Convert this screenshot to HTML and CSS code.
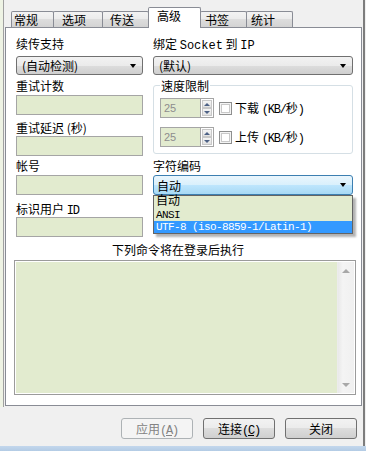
FILE: index.html
```html
<!DOCTYPE html>
<html lang="zh-CN">
<head>
    <meta charset="UTF-8">
    <meta name="viewport" content="width=device-width, initial-scale=1.0">
    <title>高级</title>
    <link rel="stylesheet" href="styles.css">
</head>
<body>
    <div class="window">
        <div class="edge"></div>
        <div class="dialog">
            <div class="tabs">
                <div class="tab t1">常规</div>
                <div class="tab t2">选项</div>
                <div class="tab t3">传送</div>
                <div class="tab active">高级</div>
                <div class="tab t5">书签</div>
                <div class="tab t6">统计</div>
            </div>
            <div class="panel">
                <div class="form">
                    <div class="col">
                        <div class="lbl">续传支持</div>
                        <div class="select mt5">(自动检测)<span class="arrow"></span></div>
                        <div class="lbl mt4">重试计数</div>
                        <div class="field mt2"></div>
                        <div class="lbl mt6">重试延迟 (秒)</div>
                        <div class="field mt1"></div>
                        <div class="lbl mt3">帐号</div>
                        <div class="field mt2"></div>
                        <div class="lbl mt7">标识用户 <span class="en">ID</span></div>
                        <div class="field mt1"></div>
                    </div>
                    <div class="col">
                        <div class="lbl">绑定 <span class="en wide">Socket</span> 到 <span class="en wide">IP</span></div>
                        <div class="select mt5">(默认)<span class="arrow"></span></div>
                        <fieldset class="speed">
                            <legend>速度限制</legend>
                            <div class="srow first">
                                <div class="spin-val">25</div>
                                <div class="spin-btns">
                                    <div class="sb"><span class="up"></span></div>
                                    <div class="sb"><span class="down"></span></div>
                                </div>
                                <div class="check"></div>
                                <div class="clabel">下载 <span class="en">(KB/</span>秒<span class="en">)</span></div>
                            </div>
                            <div class="srow second">
                                <div class="spin-val">25</div>
                                <div class="spin-btns">
                                    <div class="sb"><span class="up"></span></div>
                                    <div class="sb"><span class="down"></span></div>
                                </div>
                                <div class="check"></div>
                                <div class="clabel">上传 <span class="en">(KB/</span>秒<span class="en">)</span></div>
                            </div>
                        </fieldset>
                        <div class="lbl mt5">字符编码</div>
                        <div class="combo mt2">
                            <div class="select open">自动<span class="arrow"></span></div>
                            <div class="dropdown">
                                <div class="item first">自动</div>
                                <div class="item latin">ANSI</div>
                                <div class="item latin selected">UTF-8 (iso-8859-1/Latin-1)</div>
                            </div>
                        </div>
                    </div>
                </div>
                <div class="cmd-label">下列命令将在登录后执行</div>
                <div class="cmd">
                    <div class="cmd-area"></div>
                    <div class="scroll">
                        <div class="sarrow"><span class="up gray"></span></div>
                        <div class="sarrow"><span class="down gray"></span></div>
                    </div>
                </div>
            </div>
            <div class="buttons">
                <div class="btn disabled">应用<span class="en">(<u>A</u>)</span></div>
                <div class="btn">连接<span class="en">(<u>C</u>)</span></div>
                <div class="btn">关闭</div>
            </div>
        </div>
        <div class="frame"></div>
    </div>
    <div class="footer"></div>
</body>
</html>
```

FILE: styles.css
```css
* {
    box-sizing: border-box;
    margin: 0;
    padding: 0;
}
body {
    width: 366px;
    height: 451px;
    overflow: hidden;
    background: #f0f0f0;
    font-family: "Noto Sans CJK SC", sans-serif;
    font-size: 12px;
    color: #000;
}
.en {
    font-family: "Liberation Mono", monospace;
    font-size: 12px;
    letter-spacing: -1.2px;
}
.en.wide {
    letter-spacing: 0;
}
.window {
    display: flex;
    height: 446px;
}
.edge {
    width: 4px;
    height: 407px;
    background: #eef3e4;
    border-right: 1px solid #a0a0a0;
}
.dialog {
    width: 359px;
    padding-top: 7px;
}
.frame {
    width: 2px;
    background: #7d7d7d;
}
.footer {
    height: 5px;
    background: linear-gradient(#c3d7ec, #b3cbe5);
}

/* tabs */
.tabs {
    display: flex;
    align-items: flex-end;
    height: 20px;
    padding-left: 7px;
}
.tab {
    height: 16px;
    line-height: 16px;
    border: 1px solid #898c95;
    border-bottom: none;
    border-radius: 2px 2px 0 0;
    margin-right: -1px;
    background: linear-gradient(#f3f3f3, #ebebeb 50%, #dddddd 50%, #d3d3d3);
    white-space: nowrap;
}
.t1 { width: 43px; padding-left: 2px; }
.t2 { width: 50px; padding-left: 8px; }
.t3 { width: 47px; padding-left: 7px; }
.t5 { width: 47px; padding-left: 4px; }
.t6 { width: 47px; padding-left: 4px; }
.tab.active {
    width: 53px;
    height: 21px;
    line-height: 15px;
    padding-left: 8px;
    margin-bottom: -1px;
    background: #fff;
    position: relative;
    z-index: 1;
}

/* panel */
.panel {
    margin-left: 1px;
    width: 357px;
    height: 379px;
    border: 1px solid #898c95;
    background: #fff;
    padding: 9px 0 0 8px;
}
.form {
    display: grid;
    grid-template-columns: 127px 200px;
    column-gap: 10px;
    align-items: start;
    padding-left: 2px;
}
.col {
    display: flex;
    flex-direction: column;
}
.lbl {
    height: 14px;
    line-height: 14px;
    white-space: nowrap;
}
.mt1 { margin-top: 1px; }
.mt2 { margin-top: 2px; }
.mt3 { margin-top: 3px; }
.mt4 { margin-top: 4px; }
.mt5 { margin-top: 5px; }
.mt6 { margin-top: 6px; }
.mt7 { margin-top: 7px; }

.select {
    display: flex;
    align-items: center;
    height: 19px;
    padding: 0 6px 0 5px;
    border: 1px solid #707070;
    border-radius: 3px;
    background: linear-gradient(#f2f2f2, #ebebeb 50%, #dddddd 50%, #cfcfcf);
    white-space: nowrap;
}
.arrow {
    margin-left: auto;
    border-left: 3.5px solid transparent;
    border-right: 3.5px solid transparent;
    border-top: 4px solid #000;
}
.field {
    height: 20px;
    border: 1px solid #a5a5a5;
    background: #e2ebcf;
}

/* speed group */
.speed {
    width: 200px;
    margin-top: 4px;
    border: 1px solid #d5dfe5;
    border-radius: 3px;
    padding: 0 0 6px 6px;
}
.speed legend {
    padding: 0 1px;
    line-height: 13px;
}
.srow {
    display: flex;
    align-items: center;
    height: 20px;
}
.srow.first { margin-top: 6px; }
.srow.second { margin-top: 9px; }
.spin-val {
    width: 40px;
    height: 20px;
    border: 1px solid #a5a5a5;
    border-right: none;
    background: #e2ebcf;
    color: #8d8d8d;
    font-family: "Liberation Sans", sans-serif;
    font-size: 11px;
    line-height: 18px;
    padding-left: 3px;
}
.spin-btns {
    width: 14px;
    height: 20px;
    display: flex;
    flex-direction: column;
    border: 1px solid #a5a5a5;
    background: #fff;
}
.sb {
    flex: 1;
    display: flex;
    align-items: center;
    justify-content: center;
    margin: 0 1px 1px;
    border: 1px solid #c8c8c8;
    background: linear-gradient(#f5f5f5, #e2e2e2);
}
.sb:first-child { margin-top: 1px; margin-bottom: 0; }
.up {
    border-left: 3px solid transparent;
    border-right: 3px solid transparent;
    border-bottom: 3px solid #4d6185;
}
.down {
    border-left: 3px solid transparent;
    border-right: 3px solid transparent;
    border-top: 3px solid #4d6185;
}
.check {
    width: 13px;
    height: 13px;
    margin-left: 5px;
    border: 1px solid #8e8f8f;
    background: #fff;
    box-shadow: inset 0 0 0 1px #f4f4f4, inset 0 0 0 2px #c9c9c9;
}
.clabel {
    margin-left: 3px;
    white-space: nowrap;
}

/* encoding combo */
.combo {
    position: relative;
}
.select.open {
    height: 20px;
    padding-left: 3px;
    border-color: #3c7fb1;
    background: linear-gradient(#eaf6fd, #d9f0fc 50%, #bee6fd 50%, #a7d9f5);
}
.dropdown {
    position: absolute;
    top: 20px;
    left: 0;
    width: 200px;
    border: 1px solid #646464;
    background: #e2ebcf;
    box-shadow: 3px 3px 2px rgba(0, 0, 0, 0.3);
    z-index: 2;
}
.item {
    height: 12px;
    line-height: 12px;
    padding-left: 2px;
    white-space: nowrap;
}
.item.latin {
    font-family: "Liberation Mono", monospace;
    font-size: 11px;
    letter-spacing: -0.6px;
}
.item.first {
    height: 13px;
    line-height: 13px;
    font-family: "Liberation Mono", "Noto Sans CJK SC", monospace;
    font-size: 12px;
}
.item.selected {
    background: #3399ff;
    color: #fff;
}

/* command box */
.cmd-label {
    width: 342px;
    margin-top: 6px;
    padding-right: 14px;
    height: 14px;
    line-height: 14px;
    text-align: center;
}
.cmd {
    display: flex;
    width: 342px;
    height: 135px;
    margin-top: 3px;
    border: 1px solid #9b9b9b;
    padding: 1px;
    background: #fff;
}
.cmd-area {
    flex: 1;
    background: #e2ebcf;
}
.scroll {
    width: 17px;
    display: flex;
    flex-direction: column;
    justify-content: space-between;
    background: linear-gradient(90deg, #e9e9e9, #f4f4f4 30%, #f0f0f0);
    border-left: 1px solid #ececec;
}
.sarrow {
    height: 17px;
    display: flex;
    align-items: center;
    justify-content: center;
}
.up.gray {
    border-left-width: 4px;
    border-right-width: 4px;
    border-bottom: 4px solid #a8a8a8;
}
.down.gray {
    border-left-width: 4px;
    border-right-width: 4px;
    border-top: 4px solid #a8a8a8;
}

/* buttons */
.buttons {
    display: flex;
    justify-content: flex-end;
    gap: 10px;
    margin-top: 12px;
    padding-right: 6px;
}
.btn {
    width: 72px;
    height: 21px;
    line-height: 19px;
    text-align: center;
    border: 1px solid #707070;
    border-radius: 3px;
    background: linear-gradient(#f2f2f2, #ebebeb 50%, #dddddd 50%, #cfcfcf);
}
.btn.disabled {
    border-color: #adb2b5;
    background: #f4f4f4;
    color: #838383;
}
```
